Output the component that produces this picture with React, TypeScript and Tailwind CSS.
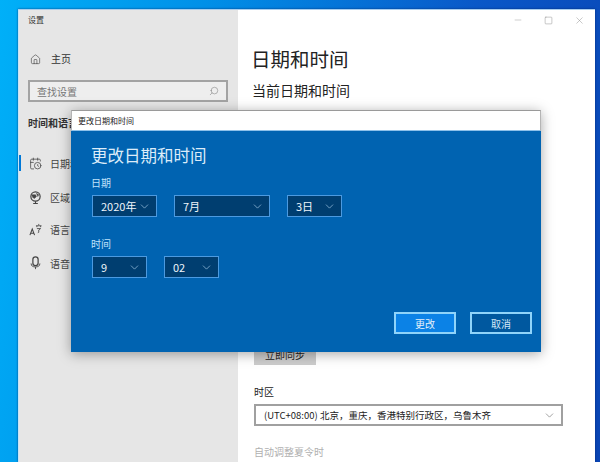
import { CalendarClock, ChevronDown, Home, Minus, Search, Square, X } from 'lucide-react';

const font = { fontFamily: '"Noto Sans CJK SC", "Liberation Sans", sans-serif' };

function RegionIcon({ className }: { className?: string }) {
  return (
    <svg viewBox="0 0 14 14" className={className} fill="none" stroke="currentColor">
      <circle cx="7" cy="6" r="5" strokeWidth="1.3" />
      <path d="M3 4h4l1 2-2 2-2-1zM8 2.5l2.5 1.5-1 2z" fill="currentColor" strokeWidth="0.5" />
      <path d="M7 11v2.5M4.5 13.5h5" strokeWidth="1.2" />
    </svg>
  );
}

function LanguageIcon({ className }: { className?: string }) {
  return (
    <svg viewBox="0 0 14 14" className={className} fill="none" stroke="currentColor" strokeWidth="1.1">
      <path d="M1 13 3.5 6.5 6 13M2 11h3" />
      <path d="M7.5 3h6M10.5 1v1.5M8.5 3v1.5M12.5 3v1.5M8.5 6h4l-2 1.5v2.5l-1 .5" strokeWidth="0.9" />
    </svg>
  );
}

function MicIcon({ className }: { className?: string }) {
  return (
    <svg viewBox="0 0 12 16" className={className} fill="none" stroke="currentColor" strokeWidth="1.4">
      <rect x="3" y="1" width="6" height="10" rx="3" />
      <path d="M1 8.5c0 3 2 4 5 4s5-1 5-4M6 12.5V15" strokeWidth="1" />
    </svg>
  );
}

const navItems = [
  { label: '日期和时间', Icon: CalendarClock, active: true, size: 'w-[13px] h-[13px]', top: 'mt-[26px]' },
  { label: '区域', Icon: RegionIcon, active: false, size: 'w-[13px] h-[13px]', top: 'mt-[20px]' },
  { label: '语言', Icon: LanguageIcon, active: false, size: 'w-[13px] h-[13px]', top: 'mt-[18px]' },
  { label: '语音', Icon: MicIcon, active: false, size: 'w-[13px] h-[14px]', top: 'mt-[20px]' },
];

function Dropdown({ value, width }: { value: string; width: string }) {
  return (
    <div className={`${width} h-[22px] flex items-center justify-between pl-[8px] pr-[5px] bg-[#003e70] border border-[#4c9ae0] text-[11px] text-[#eef5fb]`}>
      <span>{value}</span>
      <ChevronDown className="w-[13px] h-[13px] text-[#a8cbe8]" strokeWidth={1.25} />
    </div>
  );
}

export default function App() {
  return (
    <div
      className="relative w-[600px] h-[462px] overflow-hidden pl-[18px] pr-[5px] pt-[9px] bg-[linear-gradient(100deg,#00b0f8_0%,#0090e8_30%,#0a58c8_70%,#0a45b4_100%)]"
      style={font}
    >
      {/* Settings window */}
      <div className="flex h-[453px] border-t border-[#a8cdee] shadow-[0_0_2px_rgba(0,30,90,0.7)]">
        {/* Sidebar */}
        <div className="w-[220px] shrink-0 bg-[#e6e6e6] border-l border-[#c5e4f6] pl-[9px] pr-[10px] text-[#333]">
          <div className="text-[8px] leading-[10px] mt-[5px] text-[#333]">设置</div>
          <div className="flex items-center gap-[10px] mt-[27px] pl-[2px]">
            <Home className="w-[11px] h-[11px]" strokeWidth={1.25} />
            <span className="text-[10px] leading-[14px]">主页</span>
          </div>
          <div className="flex items-center justify-between h-[22px] mt-[14px] px-[7px] bg-[#eeeeee] border-2 border-[#a3a3a3] text-[10px] text-[#777]">
            <span>查找设置</span>
            <Search className="w-[10px] h-[10px] -scale-x-100" strokeWidth={1.25} />
          </div>
          <div className="text-[10px] leading-[14px] font-bold mt-[14px] whitespace-nowrap">时间和语言</div>
          {navItems.map(({ label, Icon, active, size, top }) => (
            <div key={label} className={`relative flex items-center gap-[8px] h-[14px] ${top} pl-[1px]`}>
              {active && <div className="absolute left-[-9px] top-[-1px] w-[2px] h-[16px] bg-[#0078d7]" />}
              <Icon className={`${size} text-[#444]`} strokeWidth={1.4} />
              <span className="text-[10px] whitespace-nowrap text-[#444]">{label}</span>
            </div>
          ))}
        </div>

        {/* Main content */}
        <div className="flex-1 bg-white pl-[16px] pr-[10px] text-[#222]">
          <div className="flex justify-end items-center gap-[21px] h-[20px] text-[#8a8a8a]">
            <Minus className="w-[10px] h-[10px]" strokeWidth={1} />
            <Square className="w-[9px] h-[9px]" strokeWidth={1.25} />
            <X className="w-[11px] h-[11px]" strokeWidth={1} />
          </div>
          <h1 className="text-[19.5px] leading-[26px] mt-[16px] -ml-[3px] font-normal">日期和时间</h1>
          <h2 className="text-[14px] leading-[20px] mt-[8px] -ml-[2px] font-normal">当前日期和时间</h2>
          <div className="w-[62px] h-[22px] mt-[243px] bg-[#cccccc] flex items-center justify-center text-[10px]">立即同步</div>
          <div className="text-[10px] leading-[14px] mt-[20px]">时区</div>
          <div className="flex items-center justify-between w-[309px] h-[22px] mt-[5px] pl-[8px] pr-[5px] border-2 border-[#a0a0a0] text-[9.5px]">
            <span>(UTC+08:00) 北京，重庆，香港特别行政区，乌鲁木齐</span>
            <ChevronDown className="w-[13px] h-[13px] text-[#777]" strokeWidth={1.25} />
          </div>
          <div className="text-[10px] leading-[14px] mt-[19px] text-[#b0b0b0]">自动调整夏令时</div>
        </div>
      </div>

      {/* Dialog */}
      <div className="absolute left-[71px] top-[110px] w-[470px] h-[242px] flex flex-col shadow-[0_2px_12px_rgba(0,0,0,0.35)]">
        <div className="h-[21px] shrink-0 flex items-center pl-[6px] bg-white border-t border-x border-t-[#9a9a9a] border-x-[#b5b5b5] border-b border-b-[#8dc1ea] text-[8px] text-[#222]">更改日期和时间</div>
        <div className="flex-1 bg-[#0063b1] pl-[21px] pr-[9px] flex flex-col">
          <div className="text-[16.5px] leading-[24px] mt-[12px] -ml-[1px] text-[#dcecf9]">更改日期和时间</div>
          <div className="text-[10px] leading-[14px] mt-[9px] -ml-[1px] text-[#c0e2fb]">日期</div>
          <div className="flex mt-[5px]">
            <Dropdown value="2020年" width="w-[65px]" />
            <Dropdown value="7月" width="w-[96px] ml-[17px]" />
            <Dropdown value="3日" width="w-[55px] ml-[17px]" />
          </div>
          <div className="text-[10px] leading-[14px] mt-[20px] -ml-[1px] text-[#c0e2fb]">时间</div>
          <div className="flex gap-[17px] mt-[5px]">
            <Dropdown value="9" width="w-[55px]" />
            <Dropdown value="02" width="w-[55px]" />
          </div>
          <div className="flex justify-end gap-[14px] mt-[34px]">
            <div className="w-[62px] h-[22px] flex items-center justify-center bg-[#0b82e6] border-2 border-[#8fd4fa] text-[10px] text-[#e3f0fa]">更改</div>
            <div className="w-[62px] h-[22px] flex items-center justify-center bg-[#00589f] border-2 border-[#8fd4fa] text-[10px] text-[#d5e8f7]">取消</div>
          </div>
        </div>
      </div>
    </div>
  );
}
